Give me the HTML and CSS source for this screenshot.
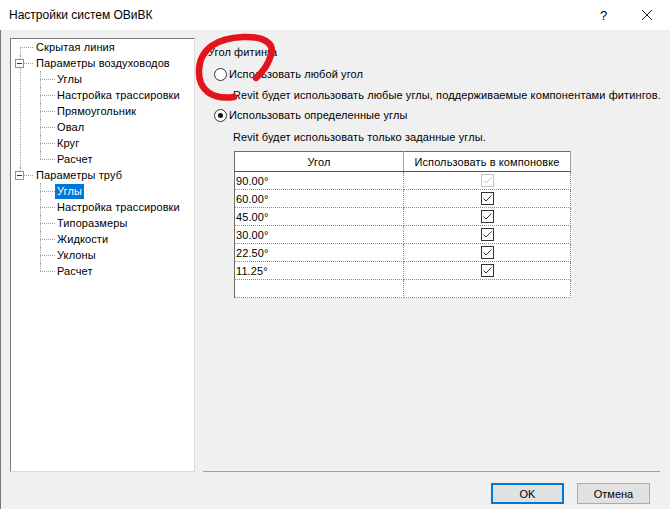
FILE: index.html
```html
<!DOCTYPE html>
<html lang="ru">
<head>
    <meta charset="UTF-8">
    <title>Настройки систем ОВиВК</title>
    <link rel="stylesheet" href="styles.css">
</head>
<body>

    <div class="titlebar">
        <span class="title">Настройки систем ОВиВК</span>
        <span class="help">?</span>
        <svg class="close" width="12" height="12" viewBox="0 0 12 12">
            <path d="M1 1 L11 11 M11 1 L1 11" stroke="#222" stroke-width="1" fill="none"/>
        </svg>
    </div>

    <div class="window">
        <div class="main">
            <div class="tree">
                <ul class="level0">
                    <li class="first"><div class="row"><span class="label">Скрытая линия</span></div></li>
                    <li class="open">
                        <div class="row"><span class="box"></span><span class="label">Параметры воздуховодов</span></div>
                        <ul class="level1">
                            <li><div class="row"><span class="label">Углы</span></div></li>
                            <li><div class="row"><span class="label">Настройка трассировки</span></div></li>
                            <li><div class="row"><span class="label">Прямоугольник</span></div></li>
                            <li><div class="row"><span class="label">Овал</span></div></li>
                            <li><div class="row"><span class="label">Круг</span></div></li>
                            <li><div class="row"><span class="label">Расчет</span></div></li>
                        </ul>
                    </li>
                    <li class="open">
                        <div class="row"><span class="box"></span><span class="label">Параметры труб</span></div>
                        <ul class="level1">
                            <li><div class="row"><span class="label selected">Углы</span></div></li>
                            <li><div class="row"><span class="label">Настройка трассировки</span></div></li>
                            <li><div class="row"><span class="label">Типоразмеры</span></div></li>
                            <li><div class="row"><span class="label">Жидкости</span></div></li>
                            <li><div class="row"><span class="label">Уклоны</span></div></li>
                            <li><div class="row"><span class="label">Расчет</span></div></li>
                        </ul>
                    </li>
                </ul>
            </div>

            <div class="settings">
                <div class="group-title">Угол фитинга</div>
                <div class="radio-row r1"><span class="radio"></span>Использовать любой угол</div>
                <p class="hint h1">Revit будет использовать любые углы, поддерживаемые компонентами фитингов.</p>
                <div class="radio-row r2"><span class="radio checked"></span>Использовать определенные углы</div>
                <p class="hint h2">Revit будет использовать только заданные углы.</p>

                <table class="angles">
                    <thead>
                        <tr><th>Угол</th><th>Использовать в компоновке</th></tr>
                    </thead>
                    <tbody id="angleRows"></tbody>
                </table>
            </div>
        </div>

        <div class="footer">
            <button class="btn default">OK</button>
            <button class="btn">Отмена</button>
        </div>
    </div>

    <!-- red hand-drawn marker over the dialog -->
    <svg class="marker" width="670" height="509" viewBox="0 0 670 509">
        <path d="M234 97 C212 100 198 90 199 70 C200 48 218 38 243 37 C263 36 275 43 271 55 C268 65 263 72 256 78"
              stroke="#e3141b" stroke-width="6.5" stroke-linecap="round" stroke-linejoin="round" fill="none"/>
    </svg>

    <script>
        const angles = [
            { value: '90.00°', used: true, locked: true },
            { value: '60.00°', used: true },
            { value: '45.00°', used: true },
            { value: '30.00°', used: true },
            { value: '22.50°', used: true },
            { value: '11.25°', used: true },
            { value: '', used: false, empty: true }
        ];

        function checkbox(locked) {
            const color = locked ? '#c4c4c4' : '#333';
            return '<svg class="check" width="13" height="13" viewBox="0 0 13 13">' +
                '<rect x="0.5" y="0.5" width="12" height="12" fill="#fff" stroke="' + color + '"/>' +
                '<path d="M2.5 6.5 L5 9 L10.5 3.5" stroke="' + color + '" stroke-width="1" fill="none"/>' +
                '</svg>';
        }

        const body = document.getElementById('angleRows');
        angles.forEach(a => {
            const tr = document.createElement('tr');
            tr.innerHTML = '<td>' + a.value + '</td><td class="use">' + (a.empty ? '' : checkbox(a.locked)) + '</td>';
            body.appendChild(tr);
        });
    </script>

</body>
</html>
```

FILE: styles.css
```css
* {
    box-sizing: border-box;
}
body {
    margin: 0;
    width: 670px;
    height: 509px;
    overflow: hidden;
    position: relative;
    font-family: "Liberation Sans", Arial, sans-serif;
    font-size: 11px;
    letter-spacing: 0.1px;
    color: #000;
    background-color: #f0f0f0;
}
.titlebar {
    height: 30px;
    background-color: #fff;
    display: flex;
    align-items: center;
    padding-left: 9px;
}
.title {
    flex: 1;
    font-size: 12px;
    letter-spacing: 0;
}
.help {
    width: 30px;
    margin-right: 11px;
    font-size: 13px;
}
.close {
    margin-right: 17px;
}
.window {
    height: 479px;
    border-left: 1px solid #7a7a7a;
}
.main {
    display: flex;
    height: 442px;
}
.tree {
    margin-top: 8px;
    margin-left: 9px;
    width: 185px;
    height: 434px;
    background-color: #fff;
    border-style: solid;
    border-width: 1px;
    border-color: #7a7a7a #dadada #dadada #7a7a7a;
}
.tree ul {
    list-style: none;
    margin: 0;
    padding: 0;
}
.tree li {
    position: relative;
}
.tree .row {
    position: relative;
    height: 16px;
    line-height: 16px;
    white-space: nowrap;
}
.level0 > li > .row {
    padding-left: 23px;
}
.level1 > li > .row {
    padding-left: 44px;
}
.label {
    padding: 0 2px;
    display: inline-block;
    line-height: 15px;
}
.label.selected {
    background-color: #0078d7;
    color: #fff;
}

/* dotted connectors */
.level0 > li::after,
.level1 > li::after {
    content: "";
    position: absolute;
    top: 0;
    bottom: 0;
    border-left: 1px dotted #a0a0a0;
}
.level0 > li::after {
    left: 9px;
}
.level1 > li::after {
    left: 29px;
}
.level0 > li.first::after {
    top: 8px;
}
.level0 > li:last-child::after,
.level1 > li:last-child::after {
    bottom: auto;
    height: 8px;
}
.tree .row::before {
    content: "";
    position: absolute;
    top: 8px;
    border-top: 1px dotted #a0a0a0;
}
.level0 > li > .row::before {
    left: 9px;
    width: 13px;
}
.level1 > li > .row::before {
    left: 29px;
    width: 15px;
}
.box {
    position: absolute;
    left: 4px;
    top: 4px;
    width: 9px;
    height: 9px;
    background-color: #fff;
    border: 1px solid #919191;
    z-index: 1;
}
.box::after {
    content: "";
    position: absolute;
    left: 1px;
    top: 3px;
    width: 5px;
    border-top: 1px solid #333;
}

.settings {
    margin-left: 8px;
    width: 457px;
    padding-left: 5px;
    border-bottom: 1px solid #a0a0a0;
}
.group-title {
    margin-top: 14px;
    height: 16px;
    line-height: 16px;
}
.radio-row {
    display: flex;
    align-items: center;
    height: 16px;
    padding-left: 6px;
}
.r1 {
    margin-top: 6px;
}
.r2 {
    margin-top: 4px;
}
.radio {
    width: 13px;
    height: 13px;
    border: 1px solid #333;
    border-radius: 50%;
    background-color: #fff;
    margin-right: 2px;
    position: relative;
}
.radio.checked::after {
    content: "";
    position: absolute;
    left: 3px;
    top: 3px;
    width: 5px;
    height: 5px;
    border-radius: 50%;
    background-color: #111;
}
.hint {
    margin: 5px 0 0 25px;
    height: 16px;
    line-height: 16px;
    white-space: nowrap;
}
.h2 {
    margin-top: 6px;
}

.angles {
    margin: 6px 0 0 26px;
    width: 337px;
    border-collapse: collapse;
    background-color: #fff;
    table-layout: fixed;
    border-left: 1px solid #6d6d6d;
    border-top: 1px solid #6d6d6d;
    border-right: 1px dotted #8a8a8a;
    border-bottom: 1px dotted #8a8a8a;
}
.angles th {
    height: 20px;
    font-weight: normal;
    text-align: center;
    border-right: 1px solid #a0a0a0;
    border-bottom: 1px solid #555;
    padding: 0;
}
.angles th:first-child {
    width: 169px;
}
.angles td {
    height: 18px;
    padding: 0 0 0 1px;
    border-bottom: 1px dotted #8a8a8a;
    border-right: 1px dotted #8a8a8a;
}
.angles td.use {
    text-align: center;
    padding: 0;
}
.check {
    display: block;
    margin: 0 auto;
}

.footer {
    display: flex;
    justify-content: flex-end;
    gap: 13px;
    padding: 11px 20px 0 0;
}
.btn {
    width: 73px;
    height: 21px;
    font-family: inherit;
    font-size: 11px;
    color: #000;
    background-color: #e1e1e1;
    border: 1px solid #adadad;
    padding: 0;
}
.btn.default {
    border: 2px solid #0078d7;
}

.marker {
    position: absolute;
    left: 0;
    top: 0;
    pointer-events: none;
}
```
